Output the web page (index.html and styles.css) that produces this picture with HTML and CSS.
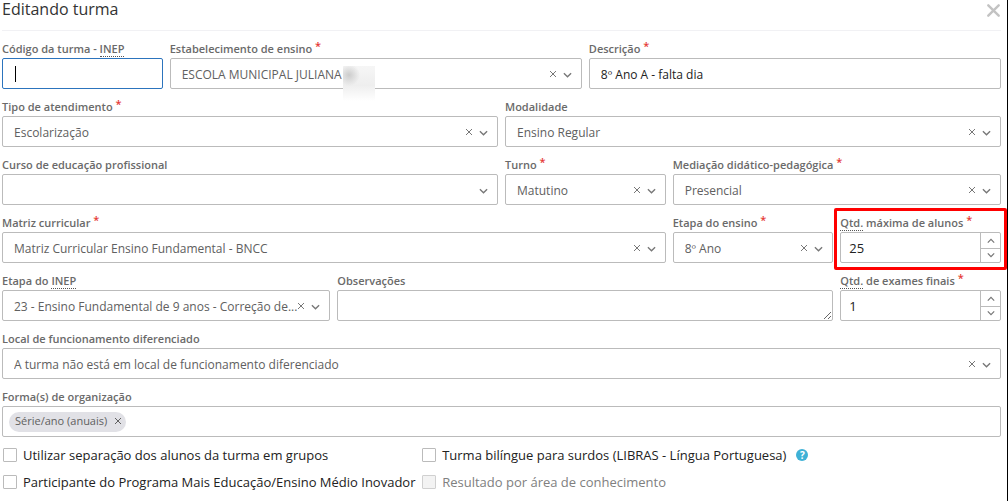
FILE: index.html
```
<!DOCTYPE html>
<html lang="pt-BR">
<head>
<meta charset="utf-8">
<title>Editando turma</title>
<link rel="stylesheet" href="styles.css">
</head>
<body>
<svg class="sprite" aria-hidden="true">
  <symbol id="x" viewBox="0 0 8 8"><path d="M1 1l6 6M7 1L1 7" fill="none" stroke="currentColor"/></symbol>
  <symbol id="down" viewBox="0 0 10 6"><path d="M1 1l4 4 4-4" fill="none" stroke="currentColor" stroke-width="1.5"/></symbol>
  <symbol id="up" viewBox="0 0 10 6"><path d="M1 5l4-4 4 4" fill="none" stroke="currentColor" stroke-width="1.5"/></symbol>
</svg>
<main class="modal">
  <header class="header">
    <h1 class="title">Editando turma</h1>
    <button class="close" type="button" aria-label="Fechar"><svg viewBox="0 0 12 12"><path d="M1.2 1.2l9.6 9.6M10.8 1.2L1.2 10.8" fill="none" stroke="currentColor" stroke-width="2.2" stroke-linecap="round"/></svg></button>
  </header>
  <form class="form">
    <div class="field span-2">
      <label class="label" for="codigo">Código da turma - <abbr title="Instituto Nacional de Estudos e Pesquisas">INEP</abbr></label>
      <div class="control active"><input class="input" id="codigo" type="text"><span class="caret"></span></div>
    </div>
    <div class="field span-5">
      <label class="label" for="escola">Estabelecimento de ensino <span class="req">*</span></label>
      <div class="control">
        <select class="select" id="escola"><option>ESCOLA MUNICIPAL JULIANA</option></select>
        <span class="redaction"></span>
        <button class="clear" type="button" aria-label="Limpar"><svg><use href="#x"/></svg></button>
        <svg class="chevron"><use href="#down"/></svg>
      </div>
    </div>
    <div class="field span-5">
      <label class="label" for="descricao">Descrição <span class="req">*</span></label>
      <div class="control"><input class="input" id="descricao" type="text" value="8º Ano A - falta dia"></div>
    </div>

    <div class="field span-6">
      <label class="label" for="tipo">Tipo de atendimento <span class="req">*</span></label>
      <div class="control">
        <select class="select" id="tipo"><option>Escolarização</option></select>
        <button class="clear" type="button" aria-label="Limpar"><svg><use href="#x"/></svg></button>
        <svg class="chevron"><use href="#down"/></svg>
      </div>
    </div>
    <div class="field span-6">
      <label class="label" for="modalidade">Modalidade</label>
      <div class="control">
        <select class="select" id="modalidade"><option>Ensino Regular</option></select>
        <button class="clear" type="button" aria-label="Limpar"><svg><use href="#x"/></svg></button>
        <svg class="chevron"><use href="#down"/></svg>
      </div>
    </div>

    <div class="field span-6">
      <label class="label" for="curso">Curso de educação profissional</label>
      <div class="control">
        <select class="select" id="curso"><option></option></select>
        <svg class="chevron"><use href="#down"/></svg>
      </div>
    </div>
    <div class="field span-2">
      <label class="label" for="turno">Turno <span class="req">*</span></label>
      <div class="control">
        <select class="select" id="turno"><option>Matutino</option></select>
        <button class="clear" type="button" aria-label="Limpar"><svg><use href="#x"/></svg></button>
        <svg class="chevron"><use href="#down"/></svg>
      </div>
    </div>
    <div class="field span-4">
      <label class="label" for="mediacao">Mediação didático-pedagógica <span class="req">*</span></label>
      <div class="control">
        <select class="select" id="mediacao"><option>Presencial</option></select>
        <button class="clear" type="button" aria-label="Limpar"><svg><use href="#x"/></svg></button>
        <svg class="chevron"><use href="#down"/></svg>
      </div>
    </div>

    <div class="field span-8">
      <label class="label" for="matriz">Matriz curricular <span class="req">*</span></label>
      <div class="control">
        <select class="select" id="matriz"><option>Matriz Curricular Ensino Fundamental - BNCC</option></select>
        <button class="clear" type="button" aria-label="Limpar"><svg><use href="#x"/></svg></button>
        <svg class="chevron"><use href="#down"/></svg>
      </div>
    </div>
    <div class="field span-2">
      <label class="label" for="etapa">Etapa do ensino <span class="req">*</span></label>
      <div class="control">
        <select class="select" id="etapa"><option>8º Ano</option></select>
        <button class="clear" type="button" aria-label="Limpar"><svg><use href="#x"/></svg></button>
        <svg class="chevron"><use href="#down"/></svg>
      </div>
    </div>
    <div class="field span-2 highlight">
      <label class="label" for="maxima"><abbr title="Quantidade">Qtd.</abbr> máxima de alunos <span class="req">*</span></label>
      <div class="control">
        <input class="input number" id="maxima" type="number" value="25">
        <span class="spinner">
          <button type="button" aria-label="Aumentar"><svg><use href="#up"/></svg></button>
          <button type="button" aria-label="Diminuir"><svg><use href="#down"/></svg></button>
        </span>
      </div>
    </div>

    <div class="field span-4">
      <label class="label" for="inep">Etapa do <abbr title="Instituto Nacional de Estudos e Pesquisas">INEP</abbr></label>
      <div class="control">
        <select class="select" id="inep"><option>23 - Ensino Fundamental de 9 anos - Correção de...</option></select>
        <button class="clear" type="button" aria-label="Limpar"><svg><use href="#x"/></svg></button>
        <svg class="chevron"><use href="#down"/></svg>
      </div>
    </div>
    <div class="field span-6">
      <label class="label" for="obs">Observações</label>
      <div class="control"><textarea class="input area" id="obs" rows="1"></textarea></div>
    </div>
    <div class="field span-2">
      <label class="label" for="exames"><abbr title="Quantidade">Qtd.</abbr> de exames finais <span class="req">*</span></label>
      <div class="control">
        <input class="input number" id="exames" type="number" value="1">
        <span class="spinner">
          <button type="button" aria-label="Aumentar"><svg><use href="#up"/></svg></button>
          <button type="button" aria-label="Diminuir"><svg><use href="#down"/></svg></button>
        </span>
      </div>
    </div>

    <div class="field span-12">
      <label class="label" for="local">Local de funcionamento diferenciado</label>
      <div class="control">
        <select class="select" id="local"><option>A turma não está em local de funcionamento diferenciado</option></select>
        <button class="clear" type="button" aria-label="Limpar"><svg><use href="#x"/></svg></button>
        <svg class="chevron"><use href="#down"/></svg>
      </div>
    </div>
    <div class="field span-12">
      <label class="label" for="formas">Forma(s) de organização</label>
      <div class="control tags">
        <span class="chip">Série/ano (anuais)<button type="button" aria-label="Remover"><svg><use href="#x"/></svg></button></span>
        <input class="tag-input" id="formas" type="text">
      </div>
    </div>

    <div class="checks">
      <div class="check span-5"><input type="checkbox" id="grupos"><label for="grupos">Utilizar separação dos alunos da turma em grupos</label></div>
      <div class="check span-7"><input type="checkbox" id="libras"><label for="libras">Turma bilíngue para surdos (LIBRAS - Língua Portuguesa)</label><button class="help" type="button" aria-label="Ajuda">?</button></div>
      <div class="check span-5"><input type="checkbox" id="programa"><label for="programa">Participante do Programa Mais Educação/Ensino Médio Inovador</label></div>
      <div class="check span-7"><input type="checkbox" id="area" disabled><label for="area">Resultado por área de conhecimento</label></div>
    </div>
  </form>
</main>
</body>
</html>
```
FILE: styles.css
```
* { box-sizing: border-box; }

body {
  margin: 0;
  min-height: 100vh;
  background: #fff;
  border-right: 1px solid #000;
  color: #222;
  font: 12px/16px "Open Sans", "Noto Sans", sans-serif;
}

button { padding: 0; border: 0; background: none; color: inherit; font: inherit; }
button svg { display: block; }
.sprite { display: none; }

.modal { padding: 0 6px 0 2px; }

.header {
  display: flex;
  align-items: flex-start;
  justify-content: space-between;
  height: 31px;
  border-bottom: 1px solid #f1f1f4;
}
.title { margin: 0; font-size: 16px; font-weight: 400; line-height: 18px; color: #333; }
.close { padding: 4px 1px; color: #c3c3c3; }
.close svg { width: 13px; height: 13px; }

.form {
  display: grid;
  grid-template-columns: repeat(12, minmax(0, 1fr));
  gap: 10px 7px;
  padding-top: 10px;
}
.span-2 { grid-column: span 2; }
.span-4 { grid-column: span 4; }
.span-5 { grid-column: span 5; }
.span-6 { grid-column: span 6; }
.span-7 { grid-column: span 7; }
.span-8 { grid-column: span 8; }
.span-12 { grid-column: span 12; }

.field { position: relative; }
.label {
  display: block;
  height: 17px;
  font-size: 11px;
  font-weight: 600;
  line-height: 16px;
  color: #6a6a6a;
  white-space: nowrap;
}
.label abbr { text-decoration: none; border-bottom: 1px dotted #555; }
.req { position: relative; top: -3px; color: #e53935; line-height: 1; }

.control {
  position: relative;
  display: flex;
  height: 31px;
  border: 1px solid #bbb;
  border-radius: 2px;
}
.control.active { border-color: #2c74bd; }

.input, .select {
  flex: 1;
  min-width: 0;
  width: 100%;
  margin: 0;
  padding: 2px 11px 0;
  border: 0;
  outline: 0;
  background: none;
  color: #222;
  font: inherit;
}
.select { appearance: none; padding-right: 30px; color: #606060; opacity: 1; }
.area { padding: 6px 11px; resize: vertical; }

.number { padding: 0 8px; appearance: textfield; font-size: 13px; }
.number::-webkit-inner-spin-button { appearance: none; }

.caret { position: absolute; left: 12px; top: 7px; width: 1px; height: 16px; background: #000; }

.clear { position: absolute; right: 24px; top: 11px; color: #777; }
.clear svg { width: 8px; height: 8px; }
.chevron { position: absolute; right: 9px; top: 13px; width: 9px; height: 6px; color: #777; pointer-events: none; }

.spinner { display: flex; flex-direction: column; width: 20px; border-left: 1px solid #bbb; }
.spinner button { flex: 1; display: flex; align-items: flex-end; justify-content: center; padding-bottom: 4px; color: #777; }
.spinner button + button { align-items: flex-start; padding: 3px 0 0; border-top: 1px solid #bbb; }
.spinner svg { width: 8px; height: 6px; }

.redaction {
  position: absolute;
  left: 172px;
  top: 7px;
  width: 32px;
  height: 35px;
  background:
    radial-gradient(circle at 6px 9px, #ccc 0, transparent 11px),
    linear-gradient(#f6f6f6, #eee 55%, #fff);
}

.highlight::after {
  content: "";
  position: absolute;
  inset: -7px -6px -7px -6px;
  border: 3px solid #f00;
  border-radius: 2px;
  pointer-events: none;
}

.tags { align-items: center; padding: 0 6px; }
.chip {
  display: flex;
  align-items: center;
  gap: 7px;
  height: 20px;
  padding: 0 4px 1px 6px;
  border-radius: 10px;
  background: #e1e1e6;
  color: #606060;
  font-size: 11px;
}
.chip svg { width: 8px; height: 8px; }
.tag-input { flex: 1; min-width: 0; border: 0; outline: 0; background: none; font: inherit; }

.checks {
  grid-column: span 12;
  display: grid;
  grid-template-columns: repeat(12, minmax(0, 1fr));
  gap: 11px 7px;
}
.check { display: flex; align-items: center; height: 16px; padding-left: 1px; font-size: 13px; white-space: nowrap; }
.check input {
  appearance: none;
  flex: none;
  width: 14px;
  height: 14px;
  margin: 0 6px 0 0;
  border: 1px solid #bbb;
  border-radius: 1px;
  background: #fff;
}
.check input:disabled { border-color: #d0d0d0; background: #f3f3f3; }
.check input:disabled + label { color: #808080; }
.help {
  width: 12px;
  height: 12px;
  margin-left: 10px;
  border-radius: 50%;
  background: #3fb1d6;
  color: #fff;
  font-size: 10px;
  font-weight: 700;
  line-height: 12px;
  text-align: center;
}
```
